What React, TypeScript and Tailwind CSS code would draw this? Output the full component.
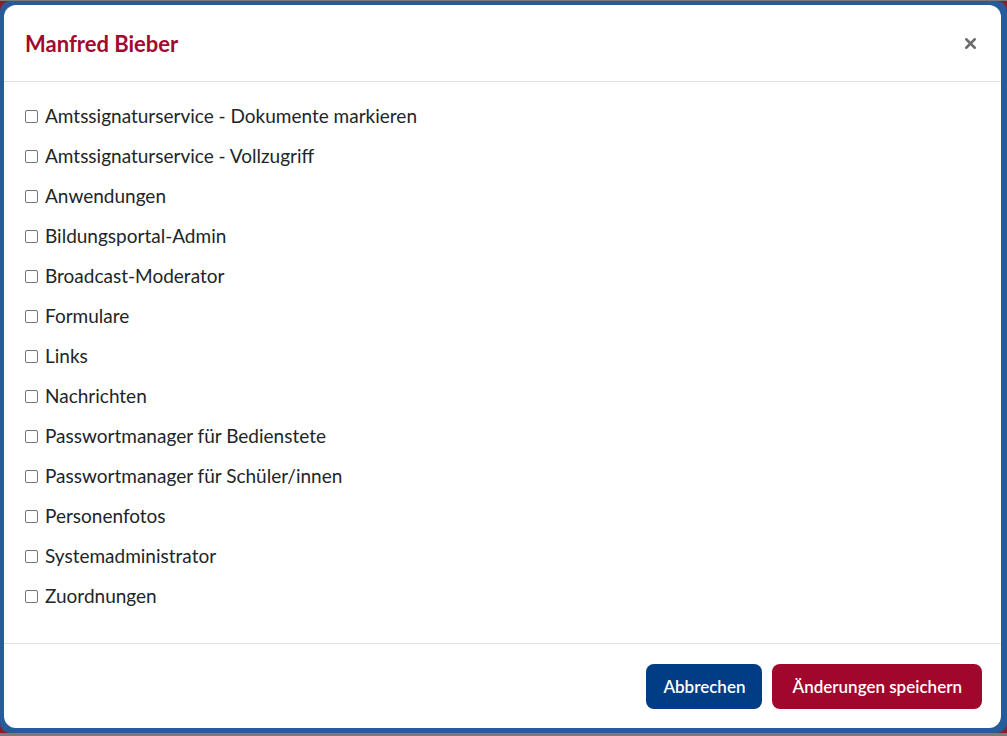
import { X } from 'lucide-react';

const roles = [
  'Amtssignaturservice - Dokumente markieren',
  'Amtssignaturservice - Vollzugriff',
  'Anwendungen',
  'Bildungsportal-Admin',
  'Broadcast-Moderator',
  'Formulare',
  'Links',
  'Nachrichten',
  'Passwortmanager für Bedienstete',
  'Passwortmanager für Schüler/innen',
  'Personenfotos',
  'Systemadministrator',
  'Zuordnungen',
];

function RoleRow({ label }: { label: string }) {
  return (
    <label className="flex h-[40px] items-center gap-[7px]">
      <input
        type="checkbox"
        className="h-[13px] w-[13px] shrink-0 appearance-none rounded-[2px] border border-[#767676] bg-white"
      />
      <span className="text-[19px] text-[#212529]">{label}</span>
    </label>
  );
}

export default function App() {
  return (
    <div
      className="flex h-[736px] w-[1007px] flex-col bg-[#7a7a7a]"
      style={{ fontFamily: 'Lato, "Open Sans", sans-serif' }}
    >
      <div className="mt-[1px] h-[732px] bg-[#8a1c2c]">
        <div className="flex h-full flex-col rounded-[10px] bg-[#285b9a] pb-[5px] pl-[4px] pr-[6px] pt-[4px]">
          <div className="flex flex-1 flex-col rounded-[12px] bg-white">
            <div className="flex h-[77px] items-center justify-between border-b border-[#dee2e6] pl-[21px] pr-[22px]">
              <h1 className="text-[22px] font-bold text-[#a10a2f]">Manfred Bieber</h1>
              <button className="text-[#6c6c6c]" aria-label="Schließen">
                <X className="h-[17px] w-[17px]" strokeWidth={3.5} />
              </button>
            </div>
            <div className="flex flex-1 flex-col pl-[21px] pt-[14px]">
              {roles.map((r) => (
                <RoleRow key={r} label={r} />
              ))}
            </div>
            <div className="flex h-[85px] items-start justify-end gap-[10px] border-t border-[#dee2e6] pr-[19px] pt-[20px]">
              <button className="h-[45px] rounded-[8px] bg-[#003d84] px-[17px] text-[17px] font-semibold text-white">
                Abbrechen
              </button>
              <button className="h-[45px] rounded-[8px] bg-[#a1062d] px-[20px] text-[17px] font-semibold text-white">
                Änderungen speichern
              </button>
            </div>
          </div>
        </div>
      </div>
      <div className="h-[3px]" />
    </div>
  );
}
